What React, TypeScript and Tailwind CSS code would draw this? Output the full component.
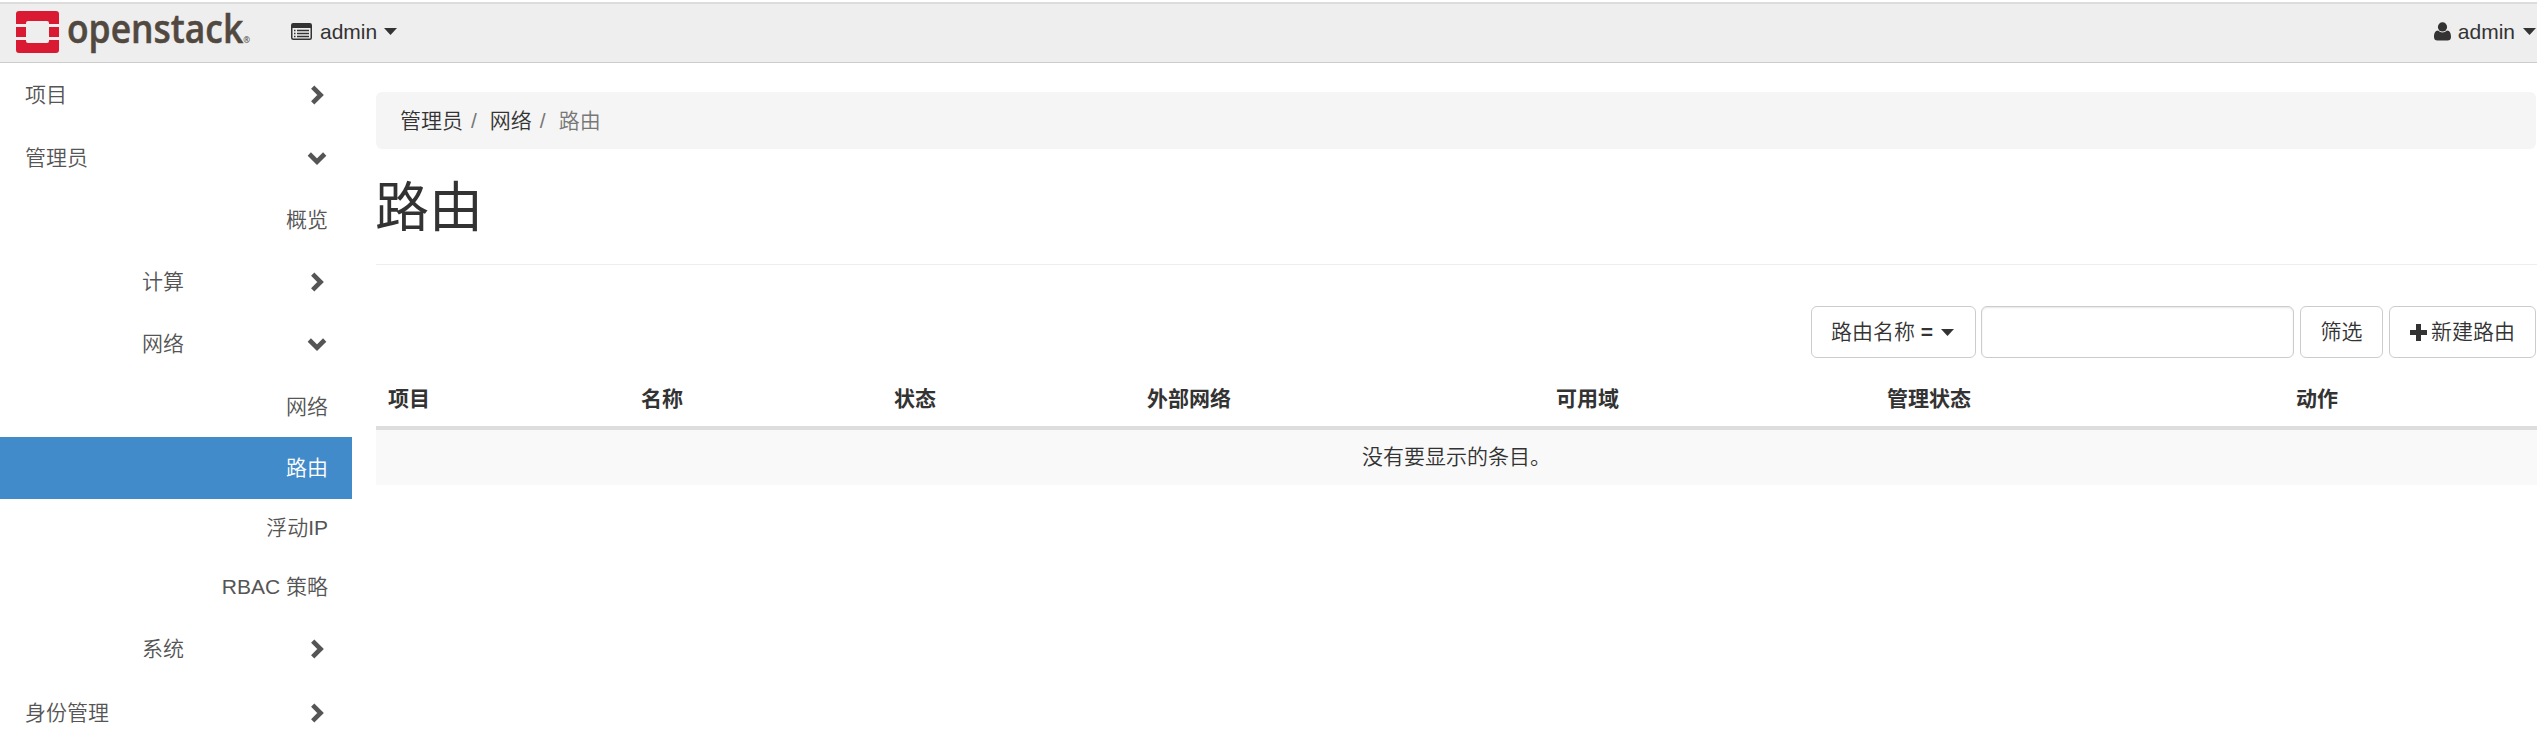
import React from "react";

type NavItem = {
  label: string;
  level: 0 | 1 | 2;
  height: string;
  state?: "open" | "closed" | "active";
};

const nav: NavItem[] = [
  { label: "项目", level: 0, height: "h-[62px]", state: "closed" },
  { label: "管理员", level: 0, height: "h-[63px]", state: "open" },
  { label: "概览", level: 2, height: "h-[62px]" },
  { label: "计算", level: 1, height: "h-[61px]", state: "closed" },
  { label: "网络", level: 1, height: "h-[64px]", state: "open" },
  { label: "网络", level: 2, height: "h-[61px]" },
  { label: "路由", level: 2, height: "h-[62px]", state: "active" },
  { label: "浮动IP", level: 2, height: "h-[58px]" },
  { label: "RBAC 策略", level: 2, height: "h-[60px]" },
  { label: "系统", level: 1, height: "h-[64px]", state: "closed" },
  { label: "身份管理", level: 0, height: "h-[63px]", state: "closed" },
];

const indent = ["pl-[25px]", "pl-[142px]", "justify-end pr-6"];

const columns = [
  { label: "项目", width: "w-[253px]" },
  { label: "名称", width: "w-[253px]" },
  { label: "状态", width: "w-[253px]" },
  { label: "外部网络", width: "w-[409px]" },
  { label: "可用域", width: "w-[331px]" },
  { label: "管理状态", width: "w-[409px]" },
  { label: "动作", width: "w-[253px]" },
];

function Chevron({ open }: { open: boolean }) {
  return (
    <svg viewBox="0 0 20 20" className="ml-auto mr-[25px] size-5 shrink-0" fill="none" stroke="currentColor" strokeWidth="4.600">
      <path d={open ? "M2.300 6 10 13.700l7.700-7.700" : "M5.700 2.100 13.600 10l-7.900 7.900"} />
    </svg>
  );
}

function Caret() {
  return (
    <svg viewBox="0 0 13 7" className="h-[7px] w-[13px] shrink-0" fill="currentColor">
      <path d="M0 0h13L6.500 7z" />
    </svg>
  );
}

function ListIcon() {
  return (
    <svg viewBox="0 0 21 17" className="h-[17px] w-[21px] shrink-0">
      <rect x=".75" y=".75" width="19.500" height="15.500" rx="1.500" fill="none" stroke="currentColor" strokeWidth="1.500" />
      <path d="M.75 2q0-1.500 1.500-1.500h16.500q1.500 0 1.500 1.500v3H.75z" fill="currentColor" />
      <path d="M3 7.500h1.500M3 10.500h1.500M3 13.500h1.500M6 7.500h12M6 10.500h12M6 13.500h12" stroke="currentColor" strokeWidth="1.300" />
    </svg>
  );
}

function UserIcon() {
  return (
    <svg viewBox="0 0 17 19" className="h-[19px] w-[17px] shrink-0" fill="currentColor">
      <circle cx="8.500" cy="4.900" r="4.600" />
      <path d="M4 8.500C1 8.500 0 11.700 0 15c0 2.400 1.400 3.500 3.400 3.500h10.200c2 0 3.400-1.100 3.400-3.500 0-3.300-1-6.500-4-6.500-1.400 1.200-2.800 1.900-4.500 1.900S5.400 9.700 4 8.500z" />
    </svg>
  );
}

function Logo() {
  return (
    <svg viewBox="0 0 240 58" className="h-[58px] w-[240px] shrink-0 overflow-visible">
      <g fill="#da1a32">
        <path d="M3 7h37a3 3 0 0 1 3 3v10H33v-1q0-2-2-2H12q-2 0-2 2v1H0V10a3 3 0 0 1 3-3z" />
        <path d="M0 23h10v10H0zM33 23h10v10H33z" />
        <path d="M0 36h10v1q0 2 2 2h19q2 0 2-2v-1h10v10a3 3 0 0 1-3 3H3a3 3 0 0 1-3-3z" />
      </g>
      <text x="51" y="38.500" fontSize="39" fontWeight="600" textLength="183" lengthAdjust="spacingAndGlyphs" fill="#514840" stroke="#514840" strokeWidth=".5" className="font-['Open_Sans',sans-serif]">
        openstack
        <tspan fontSize="9" strokeWidth="0">
          ®
        </tspan>
      </text>
    </svg>
  );
}

const button = "flex h-[52px] items-center rounded-[6px] border border-[#ccc] bg-white";

export default function App() {
  return (
    <div className="h-[729px] w-[2537px] overflow-hidden bg-white pt-0.5 font-['Liberation_Sans','Noto_Sans_CJK_SC',sans-serif] text-[21px] leading-[30px] font-[350] text-[#333]">
      <header className="flex h-[61px] items-center border-t-2 border-b border-t-[#dcdcdc] border-b-[#ccc] bg-[#eee] pl-4">
        <Logo />
        <div className="ml-[35px] flex items-center pb-[3px]">
          <ListIcon />
          <span className="ml-2">admin</span>
          <span className="ml-[7px]">
            <Caret />
          </span>
        </div>
        <div className="ml-auto flex items-center pb-[3px]">
          <UserIcon />
          <span className="ml-[7px]">admin</span>
          <span className="ml-2 mr-px">
            <Caret />
          </span>
        </div>
      </header>

      <div className="flex">
        <nav className="w-[352px] shrink-0 pt-px text-[#555]">
          {nav.map((item, i) => (
            <div
              key={i}
              className={`flex items-center ${item.height} ${indent[item.level]} ${item.state === "active" ? "bg-[#428bca] text-white" : ""}`}
            >
              <span>{item.label}</span>
              {(item.state === "open" || item.state === "closed") && <Chevron open={item.state === "open"} />}
            </div>
          ))}
        </nav>

        <main className="ml-6 w-[2161px] shrink-0 pt-[29px]">
          <div className="mr-px flex h-[57px] items-center rounded-[6px] bg-[#f5f5f5] pl-6">
            <span>管理员</span>
            <span className="ml-2 text-[#777]">/</span>
            <span className="ml-[13px]">网络</span>
            <span className="ml-2 text-[#777]">/</span>
            <span className="ml-[13px] text-[#777]">路由</span>
          </div>

          <h1 className="-ml-px flex h-[115px] items-center pt-[3px] text-[54px] leading-[60px] font-normal">路由</h1>
          <div className="h-px bg-[#eee]" />

          <div className="mt-[41px] mr-px flex justify-end">
            <div className={`${button} w-[165px] pl-[19px]`}>
              <span>
                路由名称 <span className="font-bold">=</span>
              </span>
              <span className="ml-2">
                <Caret />
              </span>
            </div>
            <input className="ml-[5px] h-[52px] w-[313px] rounded-[6px] border border-[#ccc] shadow-[inset_0_1px_2px_rgba(0,0,0,0.1)]" />
            <div className={`${button} ml-1.5 w-[83px] justify-center`}>筛选</div>
            <div className={`${button} ml-1.5 w-[147px] pl-5`}>
              <svg viewBox="0 0 17 17" className="size-[17px] shrink-0" fill="currentColor">
                <path d="M6 0h5v6h6v5h-6v6H6v-6H0V6h6z" />
              </svg>
              <span className="ml-1 whitespace-nowrap">新建路由</span>
            </div>
          </div>

          <table className="mt-2.5 w-[2161px] table-fixed border-separate border-spacing-0">
            <thead>
              <tr className="h-[62px]">
                {columns.map((c) => (
                  <th key={c.label} className={`${c.width} border-b-4 border-[#ddd] p-0 pt-[3px] pl-3 text-left font-bold`}>
                    {c.label}
                  </th>
                ))}
              </tr>
            </thead>
            <tbody>
              <tr className="h-[55px] bg-[#f9f9f9]">
                <td colSpan={7} className="p-0 pb-0.5 text-center">
                  没有要显示的条目。
                </td>
              </tr>
            </tbody>
          </table>
        </main>
      </div>
    </div>
  );
}
